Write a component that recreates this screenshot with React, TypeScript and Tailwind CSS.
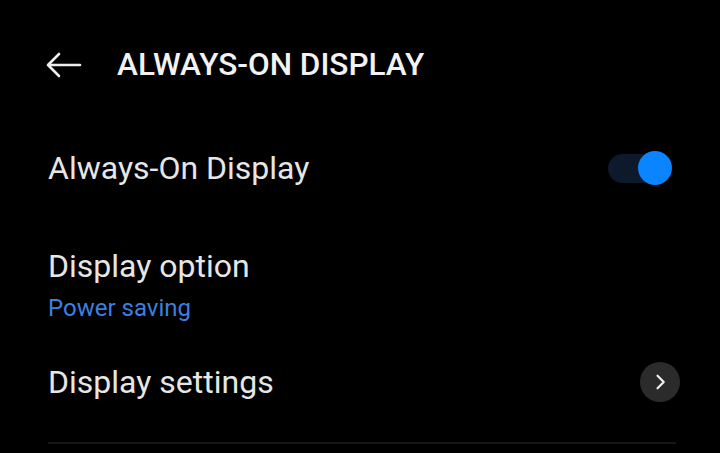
import { ReactNode } from "react";

type rowProps = {
    title: string;
    subtitle?: string;
    right?: ReactNode;
    className?: string;
};

const Row = ({ title, subtitle, right, className }: rowProps) => {
    return (
        <div className={`flex items-center justify-between ${className || ""}`}>
            <div className="flex flex-col">
                <span className="text-[32px] leading-[40px] text-[#e6e6e6]">
                    {title}
                </span>
                {subtitle && (
                    <span className="text-[24px] leading-[28px] mt-[8px] text-[#3d7fe0]">
                        {subtitle}
                    </span>
                )}
            </div>
            {right}
        </div>
    );
};

const Toggle = () => (
    <div className="relative w-[66px] h-[34px]">
        <div className="absolute left-[2px] top-[3px] w-[48px] h-[29px] rounded-full bg-[#0c1a2c]" />
        <div className="absolute right-0 top-0 w-[34px] h-[34px] rounded-full bg-[#0a84ff]" />
    </div>
);

const Chevron = () => (
    <div className="w-[40px] h-[40px] rounded-full bg-[#2b2b2b] flex items-center justify-center">
        <svg width="20" height="20" viewBox="0 0 24 24" fill="none" stroke="#f0f0f0" strokeWidth="2.6" strokeLinecap="round" strokeLinejoin="round">
            <path d="M9 4.5l7.5 7.5-7.5 7.5" />
        </svg>
    </div>
);

export default function App() {
    return (
        <div className="w-[720px] h-[453px] bg-black overflow-hidden font-['Roboto',sans-serif]">
            <div className="flex items-center h-[132px] pl-[46px] pb-[2px]">
                <svg width="36" height="26" viewBox="0 0 36 26" fill="none" stroke="#ededed" strokeWidth="2.6" strokeLinecap="round" strokeLinejoin="round">
                    <path d="M34 13H3" />
                    <path d="M13 2L2 13l11 11" />
                </svg>
                <h1 className="ml-[35px] text-[31.5px] font-medium text-[#f2f2f2]">
                    ALWAYS-ON DISPLAY
                </h1>
            </div>
            <div className="px-[48px]">
                <Row title="Always-On Display" right={<Toggle />} className="h-[72px]" />
                <Row title="Display option" subtitle="Power saving" className="mt-[42px]" />
                <Row title="Display settings" right={<Chevron />} className="mt-[35px] h-[50px] mr-[-8px]" />
                <div className="mt-[35px] h-[2px] bg-[#161616] mr-[-4px]" />
            </div>
        </div>
    );
}
